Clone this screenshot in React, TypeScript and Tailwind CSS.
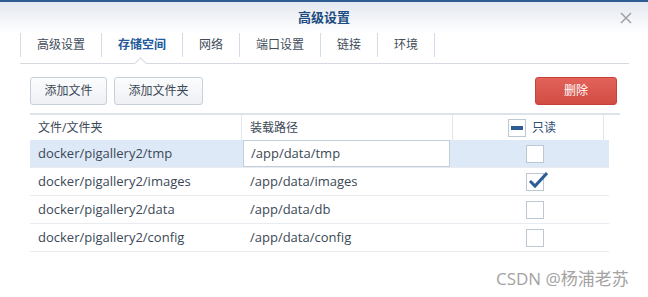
import React from "react";

const rows = [
  { src: "docker/pigallery2/tmp", dst: "/app/data/tmp", checked: false, selected: true },
  { src: "docker/pigallery2/images", dst: "/app/data/images", checked: true, selected: false },
  { src: "docker/pigallery2/data", dst: "/app/data/db", checked: false, selected: false },
  { src: "docker/pigallery2/config", dst: "/app/data/config", checked: false, selected: false },
];

const tabs = ["高级设置", "存储空间", "网络", "端口设置", "链接", "环境"];

function CheckBox({ checked }: { checked: boolean }) {
  return (
    <div className="relative w-[18px] h-[18px] border border-[#bcc7d4] bg-white">
      {checked && (
        <svg className="absolute left-[1px] top-[-4px]" width="20" height="20" viewBox="0 0 20 20">
          <path d="M2 11 L7 16 L19 3" fill="none" stroke="#2c5d97" strokeWidth="3" strokeLinejoin="miter" />
        </svg>
      )}
    </div>
  );
}

export default function App() {
  return (
    <div
      className="w-[648px] h-[297px] bg-white relative overflow-hidden border-t-2 border-[#2d5c94] text-[#3b4856]"
      style={{ fontFamily: '"Open Sans", "Noto Sans CJK SC", sans-serif' }}
    >
      <div className="bg-gradient-to-b from-[#e3e8ef] to-white h-[31px] flex items-center justify-center relative">
        <span className="text-[13px] font-bold text-[#1d4c82] leading-none">高级设置</span>
        <svg className="absolute left-[620px] top-[10px]" width="12" height="12" viewBox="0 0 12 12">
          <path d="M1 1 L11 11 M11 1 L1 11" stroke="#a0a4a8" strokeWidth="1.6" />
        </svg>
      </div>
      <div className="mx-[20px] w-[609px] h-[31px] border-b border-[#d5dae1] relative">
        <div className="flex h-[24px]">
          {tabs.map((t, i) => (
            <div
              key={t}
              className={
                "h-[24px] px-[16px] border-l border-[#d3dce6] flex items-center text-[12px] leading-none " +
                (i === tabs.length - 1 ? "border-r " : "") +
                (i === 1 ? "font-bold text-[#23599a]" : "text-[#414d5a]")
              }
            >
              {t}
            </div>
          ))}
        </div>
        <div className="absolute left-[116px] bottom-[-5px] w-[9px] h-[9px] rotate-45 bg-white border-l border-t border-[#d5dae1]" />
      </div>
      <div className="mx-[30px] mt-[13px] flex items-center h-[28px]">
        <button className="h-[28px] w-[77px] rounded-[3px] border border-[#c6cfda] bg-gradient-to-b from-[#fcfdfe] to-[#edf0f4] text-[12px] text-[#3b4856]">
          添加文件
        </button>
        <button className="ml-[7px] h-[28px] w-[89px] rounded-[3px] border border-[#c6cfda] bg-gradient-to-b from-[#fcfdfe] to-[#edf0f4] text-[12px] text-[#3b4856]">
          添加文件夹
        </button>
        <button className="ml-auto mr-[1px] h-[28px] w-[82px] rounded-[3px] border border-[#c8403a] bg-gradient-to-b from-[#e2625a] to-[#d24c43] text-[12px] text-white">
          删除
        </button>
      </div>
      <div className="ml-[30px] mt-[8px]">
        <div className="flex w-[590px] h-[27px] border-t-2 border-[#dde3ea] text-[12px] leading-none">
          <div className="w-[212px] flex items-center pl-[8px] border-r border-[#dfe6ee]">文件/文件夹</div>
          <div className="w-[211px] flex items-center pl-[8px] border-r border-[#dfe6ee]">装载路径</div>
          <div className="w-[151px] flex items-center pl-[55px] border-r border-[#dfe6ee]">
            <div className="w-[18px] h-[18px] border border-[#bcc7d4] bg-white flex items-center justify-center">
              <div className="w-[12px] h-[4px] bg-[#2c5d97]" />
            </div>
            <span className="ml-[6px] text-[#2f4f77]">只读</span>
          </div>
          <div className="w-[16px]" />
        </div>
        {rows.map((r) => (
          <div
            key={r.src}
            className={
              "flex w-[579px] h-[28px] border-b border-[#e8ebef] text-[13px] " +
              (r.selected ? "bg-[#dee9f8]" : "")
            }
          >
            <div className="w-[212px] flex items-center pl-[8px]">{r.src}</div>
            <div className="w-[211px] flex items-center">
              {r.selected ? (
                <div className="ml-[1px] w-[207px] h-[27px] border border-[#c4ceda] bg-white flex items-center pl-[7px]">
                  {r.dst}
                </div>
              ) : (
                <span className="pl-[8px]">{r.dst}</span>
              )}
            </div>
            <div className="w-[156px] flex items-center pl-[73px]">
              <CheckBox checked={r.checked} />
            </div>
          </div>
        ))}
      </div>
      <div className="absolute left-[496px] top-[266px] text-[17px] text-[#a3a3a3] leading-[22px]">
        CSDN @杨浦老苏
      </div>
    </div>
  );
}
